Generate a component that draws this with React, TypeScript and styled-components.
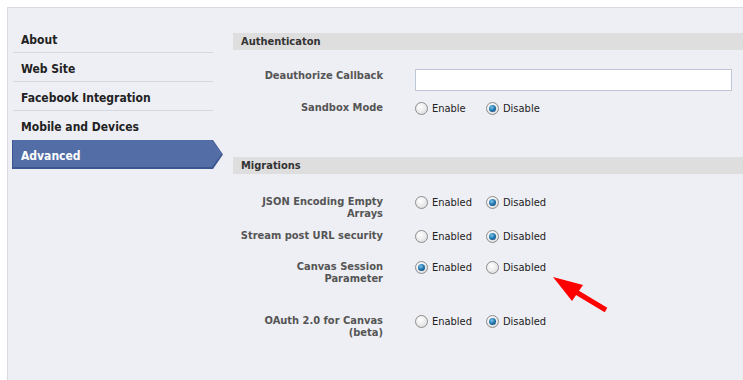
import React from 'react';
import styled, { createGlobalStyle } from 'styled-components';

const GlobalStyle = createGlobalStyle`
  html, body {
    margin: 0;
    padding: 0;
    background: #ffffff;
  }
  body {
    font-family: Tahoma, "DejaVu Sans Condensed", "DejaVu Sans", sans-serif;
    font-size: 11px;
    color: #333333;
  }
`;

const Page = styled.div`
  position: relative;
  display: flex;
  margin: 7px 0 0 7px;
  height: 372px;
  border-left: 1px solid #d9dbe2;
  border-top: 1px solid #d9dbe2;
  background: #eeeff4;
`;

const Sidebar = styled.ul`
  list-style: none;
  width: 211px;
  margin: 0 0 0 4px;
  padding: 16px 0 0;
  flex-shrink: 0;
`;

const NavItem = styled.li<{ last?: boolean }>`
  height: 26px;
  margin: 0 10px 0 1px;
  padding: 2px 0 0 8px;
  border-bottom: ${(p) => (p.last ? 'none' : '1px solid #d6d8df')};
  font-weight: bold;
  font-size: 12px;
  line-height: 28px;
  color: #222222;
`;

const ActiveItem = styled.li`
  height: 29px;
  background: #3c5590;
  clip-path: polygon(0 0, calc(100% - 10px) 0, 100% 50%, calc(100% - 10px) 100%, 0 100%);
`;

const ActiveInner = styled.div`
  height: 27px;
  margin: 1px;
  padding-left: 8px;
  background: #536ea6;
  clip-path: polygon(0 0, calc(100% - 10px) 0, 100% 50%, calc(100% - 10px) 100%, 0 100%);
  font-weight: bold;
  font-size: 12px;
  line-height: 32px;
  color: #ffffff;
`;

const Content = styled.div`
  flex: 1;
  margin-left: 10px;
  padding-top: 25px;
`;

const SectionBar = styled.div<{ gap?: number }>`
  height: 17px;
  margin-top: ${(p) => p.gap ?? 0}px;
  padding-left: 8px;
  background: #dedede;
  font-weight: bold;
  font-size: 11px;
  line-height: 17px;
  color: #333333;
`;

const Row = styled.div<{ space: number }>`
  display: grid;
  grid-template-columns: 150px 1fr;
  column-gap: 32px;
  margin-top: ${(p) => p.space}px;
`;

const Label = styled.div`
  text-align: right;
  font-weight: bold;
  font-size: 11px;
  line-height: 12px;
  color: #555555;
`;

const TextInput = styled.input`
  box-sizing: border-box;
  width: 317px;
  height: 22px;
  margin: -1px 0 0;
  border: 1px solid #bdc7d8;
  background: #ffffff;
  outline: none;
`;

const Options = styled.div`
  display: flex;
  align-items: center;
  height: 12px;
`;

const Option = styled.label`
  display: flex;
  align-items: center;
  width: 71px;
  font-size: 11px;
  color: #222222;
`;

const Radio = styled.span<{ checked?: boolean }>`
  box-sizing: border-box;
  position: relative;
  width: 13px;
  height: 13px;
  margin-right: 4px;
  border-radius: 50%;
  border: 1px solid #8d8d8d;
  background: radial-gradient(circle at 40% 35%, #ffffff 0%, #f0f0f0 40%, #d4d4d4 100%);
  flex-shrink: 0;
  &::after {
    content: '';
    display: ${(p) => (p.checked ? 'block' : 'none')};
    position: absolute;
    left: 2px;
    top: 2px;
    width: 7px;
    height: 7px;
    border-radius: 50%;
    background: radial-gradient(circle at 40% 35%, #7cc4ec 0%, #1f74ad 50%, #13385c 100%);
  }
`;

const Arrow = styled.svg`
  position: absolute;
  left: 532px;
  top: 257px;
`;

type Pick = 'first' | 'second';

const RadioPair: React.FC<{ a: string; b: string; value: Pick }> = ({ a, b, value }) => (
  <Options>
    <Option>
      <Radio checked={value === 'first'} />
      {a}
    </Option>
    <Option>
      <Radio checked={value === 'second'} />
      {b}
    </Option>
  </Options>
);

const nav = ['About', 'Web Site', 'Facebook Integration', 'Mobile and Devices'];

const migrations: { label: React.ReactNode; value: Pick; space: number }[] = [
  { label: <>JSON Encoding Empty<br />Arrays</>, value: 'second', space: 22 },
  { label: 'Stream post URL security', value: 'second', space: 10 },
  { label: <>Canvas Session<br />Parameter</>, value: 'first', space: 19 },
  { label: <>OAuth 2.0 for Canvas<br />(beta)</>, value: 'second', space: 30 },
];

export default function App() {
  return (
    <>
      <GlobalStyle />
      <Page>
        <Sidebar>
          {nav.map((n, i) => (
            <NavItem key={n} last={i === nav.length - 1}>
              {n}
            </NavItem>
          ))}
          <ActiveItem>
            <ActiveInner>Advanced</ActiveInner>
          </ActiveItem>
        </Sidebar>
        <Content>
          <SectionBar>Authenticaton</SectionBar>
          <Row space={20}>
            <Label>Deauthorize Callback</Label>
            <TextInput />
          </Row>
          <Row space={11}>
            <Label>Sandbox Mode</Label>
            <RadioPair a="Enable" b="Disable" value="second" />
          </Row>
          <SectionBar gap={43}>Migrations</SectionBar>
          {migrations.map((m, i) => (
            <Row key={i} space={m.space}>
              <Label>{m.label}</Label>
              <RadioPair a="Enabled" b="Disabled" value={m.value} />
            </Row>
          ))}
        </Content>
        <Arrow width="80" height="55" viewBox="0 0 80 55">
          <polygon points="13,12 43,20 32,36" fill="#ff0000" />
          <line x1="36" y1="27" x2="66" y2="45" stroke="#ff0000" strokeWidth="5" />
        </Arrow>
      </Page>
    </>
  );
}
